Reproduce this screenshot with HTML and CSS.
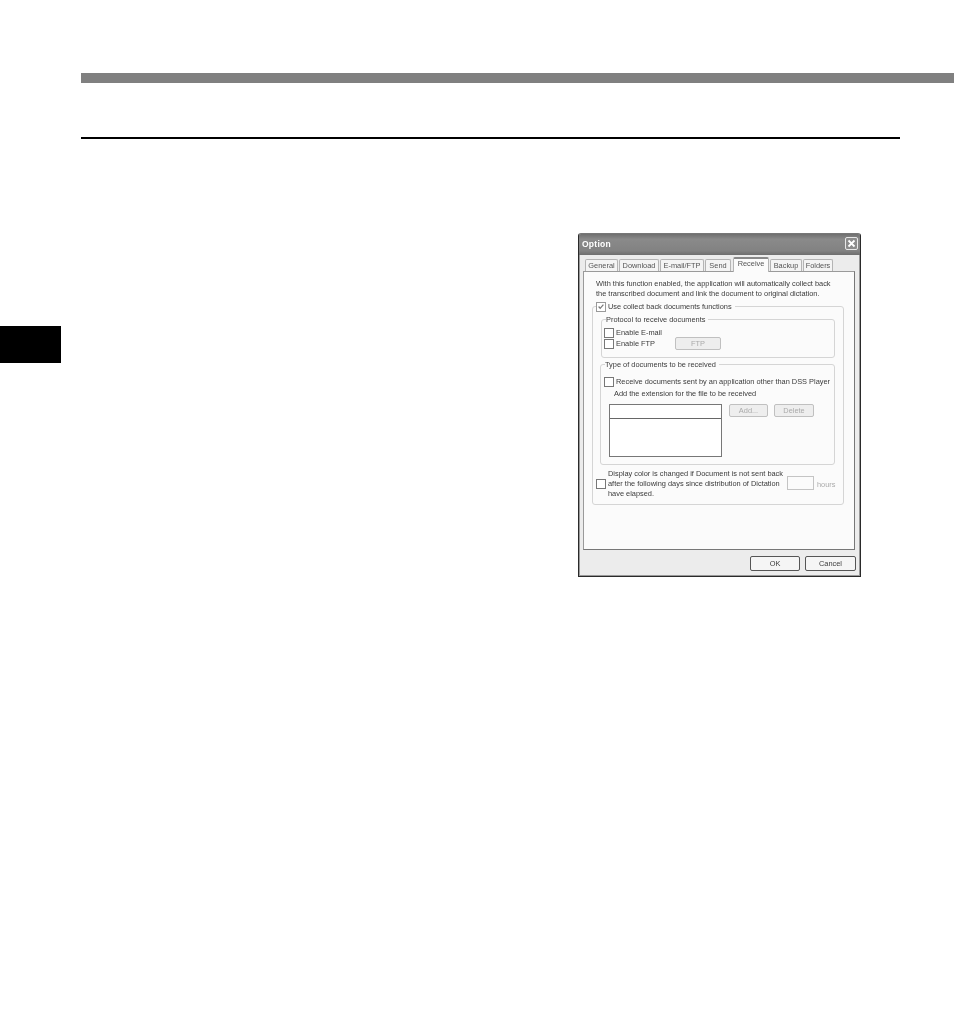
FILE: index.html
```html
<!DOCTYPE html>
<html lang="en">
<head>
<meta charset="utf-8">
<title>Option</title>
<link rel="stylesheet" href="styles.css">
</head>
<body>
<div class="head-bar"></div>
<div class="head-rule"></div>
<main class="content">
  <div class="side-tab"></div>
  <section class="dialog">
    <header class="title-bar">
      <span class="title">Option</span>
      <span class="close"><svg viewBox="0 0 13 13" width="13" height="13"><rect x="0.5" y="0.5" width="12" height="12" rx="1.5" fill="#8c8c8c" stroke="#e8e8e8"/><path d="M3.5 3.5l6 6M9.5 3.5l-6 6" stroke="#fff" stroke-width="1.8"/></svg></span>
    </header>
    <nav class="tabs">
      <span class="tab t-general">General</span>
      <span class="tab t-download">Download</span>
      <span class="tab t-email">E-mail/FTP</span>
      <span class="tab t-send">Send</span>
      <span class="tab active t-receive">Receive</span>
      <span class="tab t-backup">Backup</span>
      <span class="tab t-folders">Folders</span>
    </nav>
    <div class="pane">
      <p class="intro">With this function enabled, the application will automatically collect back<br>the transcribed document and link the document to original dictation.</p>
      <div class="group outer">
        <div class="legend legend-check"><span class="check checked"><svg viewBox="0 0 10 10" width="9" height="9"><path d="M2 5l2 2.4L8 2.6" fill="none" stroke="#777" stroke-width="1.5"/></svg></span>Use collect back documents functions</div>
        <div class="group protocol">
          <div class="legend">Protocol to receive documents</div>
          <div class="row row-mail"><span class="check"></span>Enable E-mail</div>
          <div class="row row-ftp"><span class="check"></span><span class="ftp-label">Enable FTP</span><span class="btn disabled btn-ftp">FTP</span></div>
        </div>
        <div class="group types">
          <div class="legend">Type of documents to be received</div>
          <div class="row row-receive"><span class="check"></span>Receive documents sent by an application other than DSS Player</div>
          <div class="hint">Add the extension for the file to be received</div>
          <div class="list-row">
            <div class="listbox"><div class="list-head"></div></div>
            <span class="btn disabled btn-add">Add...</span>
            <span class="btn disabled btn-delete">Delete</span>
          </div>
        </div>
        <div class="overdue">
          <span class="check"></span>
          <p class="overdue-text">Display color is changed if Document is not sent back<br>after the following days since distribution of Dictation<br>have elapsed.</p>
          <span class="hours-input"></span>
          <span class="hours">hours</span>
        </div>
      </div>
    </div>
    <footer class="actions">
      <span class="btn btn-ok">OK</span>
      <span class="btn btn-cancel">Cancel</span>
    </footer>
  </section>
</main>
</body>
</html>
```
FILE: styles.css
```css
* { box-sizing: border-box; }
html, body { margin: 0; padding: 0; background: #fff; }
body { width: 954px; height: 1021px; overflow: hidden; font-family: "Liberation Sans", Arial, sans-serif; }

.head-bar { height: 10px; margin: 73px 0 0 81px; background: #808080; }
.head-rule { height: 2px; width: 819px; margin: 54px 0 0 81px; background: #000; }

.content { display: flex; align-items: flex-start; margin-top: 94px; }
.side-tab { width: 61px; height: 37px; margin-top: 93px; background: #000; }

.dialog {
  width: 283px; height: 344px; margin-left: 517px;
  border: 1px solid #2a2a2a; border-top-color: #777;
  border-radius: 3px 3px 0 0;
  padding: 0 4px 0 4px;
  background: #ececec;
  color: #3a3a3a;
  font-size: 7.4px; line-height: 10px;
  filter: blur(0.35px);
  box-shadow: inset 1px 0 #999, inset -1px 0 #999, inset 0 -1px #999;
}
.title-bar {
  display: flex; justify-content: space-between; align-items: center;
  height: 21px; margin: 0 -4px; padding: 0 2px 2px 3px;
  background: linear-gradient(#6f6f6f, #8a8a8a 25%, #828282 80%, #6e6e6e);
  border-radius: 2px 2px 0 0;
}
.title { color: #fff; font-weight: bold; font-size: 8.5px; letter-spacing: 0.25px; }
.close { display: flex; }

.tabs { display: flex; align-items: flex-end; height: 16px; padding-left: 2px; }
.tab {
  display: flex; align-items: center; justify-content: center;
  height: 12px; margin-right: 1px;
  background: #f4f4f4; border: 1px solid #b4b4b4; border-bottom: 0;
  border-radius: 2px 2px 0 0; color: #555;
}
.t-general { width: 33px; }
.t-download { width: 40px; }
.t-email { width: 44px; }
.t-send { width: 26px; margin-right: 2px; }
.t-backup { width: 32px; }
.t-folders { width: 30px; }
.tab.active {
  width: 36px; height: 15px; position: relative; top: 1px; padding-bottom: 3px;
  background: #fbfbfb; border-top: 2px solid #888; z-index: 1;
}

.pane {
  width: 272px; height: 279px; padding: 7px 0 0 8px;
  background: #fbfbfb; border: 1px solid #9a9a9a; border-right-color: #777; border-bottom-color: #777;
}
.intro { margin: 0 0 7px 4px; line-height: 10px; white-space: nowrap; }

.group { position: relative; border: 1px solid #d5d5d5; border-radius: 3px; }
.legend {
  position: absolute; top: -6px; left: 4px; padding-right: 3px;
  background: #fbfbfb; line-height: 11px; white-space: nowrap; display: flex; align-items: center;
}
.outer { width: 252px; height: 199px; padding: 12px 7px 0 8px; }
.legend-check { top: -6px; left: 3px; }

.check {
  flex: none; display: inline-flex; align-items: center; justify-content: center;
  width: 10px; height: 10px; margin-right: 2px;
  background: #fff; border: 1px solid #777;
}
.check.checked { border-color: #999; }

.protocol { width: 234px; height: 39px; margin-bottom: 6px; }
.row { display: flex; align-items: center; white-space: nowrap; }
.row-mail { padding: 8px 0 0 2px; }
.row-ftp { height: 13px; margin-top: -1px; padding-left: 2px; }
.ftp-label { width: 59px; }

.btn {
  display: inline-flex; align-items: center; justify-content: center;
  background: #f5f5f5; border: 1px solid #555; border-radius: 2px;
}
.btn.disabled { color: #aaa; background: #eee; border-color: #c0c0c0; }
.btn-ftp { width: 46px; height: 13px; }

.types { width: 235px; height: 101px; margin-left: -1px; margin-bottom: 4px; }
.row-receive { padding: 12px 0 0 3px; }
.hint { margin: 1px 0 0 13px; line-height: 11px; }
.list-row { display: flex; align-items: flex-start; margin: 5px 0 0 8px; }
.listbox { width: 113px; height: 53px; background: #fff; border: 1px solid #777; margin-right: 7px; }
.list-head { height: 14px; border-bottom: 1px solid #666; }
.btn-add { width: 39px; height: 13px; margin-right: 6px; }
.btn-delete { width: 40px; height: 13px; }

.overdue { display: flex; align-items: center; margin-left: -5px; }
.overdue-text { margin: 0; width: 179px; line-height: 10px; white-space: nowrap; }
.hours-input { width: 27px; height: 14px; margin: -2px 3px 0 0; background: #fbfbfb; border: 1px solid #c4c4c4; }
.hours { color: #aaa; margin-top: 2px; }

.actions { display: flex; justify-content: flex-end; gap: 5px; margin: 6px 0 0 0; }
.btn-ok { width: 50px; height: 15px; }
.btn-cancel { width: 51px; height: 15px; }
```
